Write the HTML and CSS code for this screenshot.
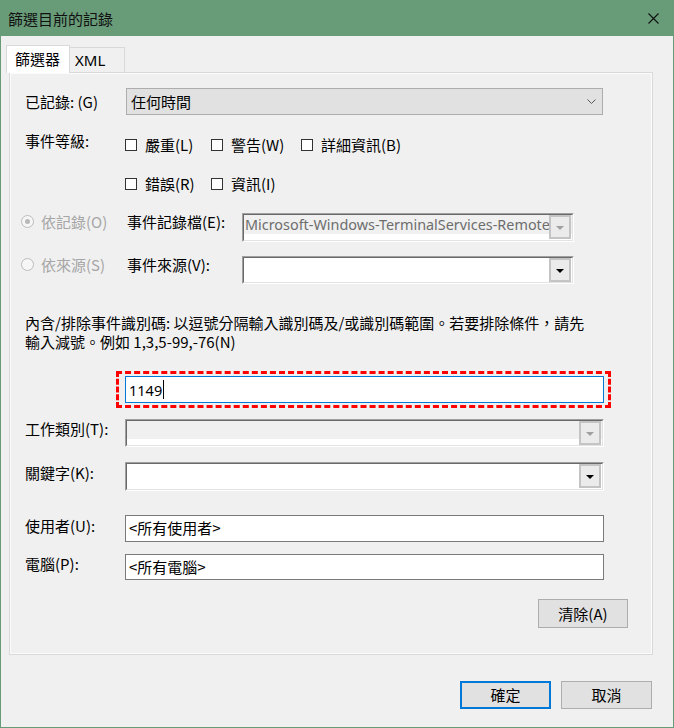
FILE: index.html
```html
<!DOCTYPE html>
<html lang="zh-Hant">
<head>
<meta charset="utf-8">
<title>篩選目前的記錄</title>
<link rel="stylesheet" href="styles.css">
</head>
<body>
<div class="window">
  <div class="titlebar">
    <span class="title">篩選目前的記錄</span>
    <svg class="close" width="11" height="11" viewBox="0 0 11 11"><path d="M0.5 0.5 L10.5 10.5 M10.5 0.5 L0.5 10.5" stroke="#111" stroke-width="1.1" fill="none"/></svg>
  </div>
  <div class="tabs">
    <div class="tab active">篩選器</div>
    <div class="tab">XML</div>
  </div>
  <div class="panel">
    <div class="row r-logged">
      <span class="lbl">已記錄: (G)</span>
      <div class="select">
        <span class="sel-text">任何時間</span>
        <svg class="chev" width="9" height="5" viewBox="0 0 9 5"><path d="M0.5 0.5 L4.5 4.5 L8.5 0.5" stroke="#5a5a5a" stroke-width="1" fill="none"/></svg>
      </div>
    </div>
    <div class="row r-level">
      <span class="lbl lvl">事件等級:</span>
      <div class="checks">
        <label class="chk"><span class="box"></span>嚴重(L)</label>
        <label class="chk"><span class="box"></span>警告(W)</label>
        <label class="chk"><span class="box"></span>詳細資訊(B)</label>
        <label class="chk"><span class="box"></span>錯誤(R)</label>
        <label class="chk"><span class="box"></span>資訊(I)</label>
      </div>
    </div>
    <div class="row r-radio r-log">
      <span class="radio on"></span>
      <span class="rlbl">依記錄(O)</span>
      <span class="clbl">事件記錄檔(E):</span>
      <div class="combo disabled narrow">
        <div class="combo-in">
          <span class="ctext">Microsoft-Windows-TerminalServices-RemoteC</span>
          <span class="dd"><i></i></span>
        </div>
      </div>
    </div>
    <div class="row r-radio r-src">
      <span class="radio"></span>
      <span class="rlbl">依來源(S)</span>
      <span class="clbl">事件來源(V):</span>
      <div class="combo narrow h28">
        <div class="combo-in">
          <span class="ctext"></span>
          <span class="dd"><i></i></span>
        </div>
      </div>
    </div>
    <p class="desc">內含/排除事件識別碼: 以逗號分隔輸入識別碼及/或識別碼範圍。若要排除條件，請先<br>輸入減號。例如 1,3,5-99,-76(N)</p>
    <div class="dashed">
      <div class="idinput"><span>1149</span><span class="caret"></span></div>
    </div>
    <div class="row r-task">
      <span class="lbl">工作類別(T):</span>
      <div class="combo disabled wide h28">
        <div class="combo-in">
          <span class="ctext"></span>
          <span class="dd"><i></i></span>
        </div>
      </div>
    </div>
    <div class="row r-key">
      <span class="lbl">關鍵字(K):</span>
      <div class="combo wide">
        <div class="combo-in">
          <span class="ctext"></span>
          <span class="dd"><i></i></span>
        </div>
      </div>
    </div>
    <div class="row r-user">
      <span class="lbl">使用者(U):</span>
      <div class="textbox">&lt;所有使用者&gt;</div>
    </div>
    <div class="row r-comp">
      <span class="lbl">電腦(P):</span>
      <div class="textbox h26">&lt;所有電腦&gt;</div>
    </div>
    <div class="row r-clear">
      <button class="btn clear">清除(A)</button>
    </div>
  </div>
  <div class="footer">
    <button class="btn default">確定</button>
    <button class="btn cancel">取消</button>
  </div>
</div>
</body>
</html>
```

FILE: styles.css
```css
html, body {
  margin: 0;
  padding: 0;
  background: #f0f0f0;
}

body {
  font-family: "Noto Sans CJK TC", "Noto Sans", sans-serif;
  font-size: 15px;
  color: #000;
}

.window {
  width: 674px;
  height: 728px;
  box-sizing: border-box;
  border: 1px solid #689b78;
  border-top: 0;
  display: flex;
  flex-direction: column;
  background: #f0f0f0;
  overflow: hidden;
}

.titlebar {
  height: 36px;
  flex: none;
  background: #689b78;
  display: flex;
  align-items: center;
}

.title {
  padding-left: 7px;
  font-size: 15px;
  color: #111;
  line-height: 20px;
  margin-top: 2px;
}

.close {
  margin-left: auto;
  margin-right: 14px;
  margin-top: 1px;
}

.tabs {
  display: flex;
  align-items: flex-end;
  height: 27px;
  margin-top: 9px;
  padding-left: 7px;
  position: relative;
  z-index: 1;
}

.tab {
  box-sizing: border-box;
  height: 25px;
  border: 1px solid #d9d9d9;
  border-bottom: 0;
  background: #f0f0f0;
  line-height: 24px;
  font-size: 15px;
}

.tab.active {
  height: 28px;
  width: 64px;
  margin-left: -2px;
  margin-bottom: -1px;
  background: #fff;
  padding-left: 8px;
  line-height: 26px;
}

.tab:not(.active) {
  width: 56px;
  margin-left: -1px;
  padding-left: 5px;
  font-family: "Noto Sans", sans-serif;
  line-height: 25px;
}

.panel {
  margin-left: 8px;
  width: 644px;
  box-sizing: border-box;
  border: 1px solid #d9d9d9;
  box-shadow: inset 0 0 0 1px #fbfbfb;
  padding: 15px 24px 26px 15px;
  display: flex;
  flex-direction: column;
  flex: none;
}

.row {
  display: flex;
  align-items: flex-start;
}

.lbl {
  width: 100px;
  flex: none;
  white-space: nowrap;
  line-height: 20px;
}

/* 已記錄 */
.r-logged {
  align-items: center;
}

.select {
  margin-left: 1px;
  width: 477px;
  height: 27px;
  box-sizing: border-box;
  border: 1px solid #adadad;
  background: #e1e1e1;
  display: flex;
  align-items: center;
  padding-left: 4px;
}

.sel-text {
  line-height: 20px;
}

.chev {
  margin-left: auto;
  margin-right: 6px;
}

/* 事件等級 */
.r-level {
  margin-top: 15px;
}

.lvl {
  line-height: 22px;
}

.checks {
  padding-top: 4px;
  display: grid;
  grid-template-columns: 86px 90px auto;
  grid-auto-rows: 22px;
  row-gap: 17px;
}

.chk {
  display: flex;
  align-items: center;
  white-space: nowrap;
  line-height: 22px;
}

.box {
  width: 12px;
  height: 12px;
  box-sizing: border-box;
  border: 1px solid #333;
  background: #fff;
  margin-right: 8px;
  flex: none;
}

/* radio rows */
.r-radio {
  margin-left: -4px;
}

.r-log {
  margin-top: 18px;
}

.r-src {
  margin-top: 14px;
}

.radio {
  width: 13px;
  height: 13px;
  box-sizing: border-box;
  border: 1px solid #bcbcbc;
  border-radius: 50%;
  background: #f6f6f6;
  margin-top: 2px;
  flex: none;
  display: flex;
  align-items: center;
  justify-content: center;
}

.radio.on::after {
  content: "";
  width: 5px;
  height: 5px;
  border-radius: 50%;
  background: #b8b8b8;
}

.rlbl {
  width: 86px;
  margin-left: 7px;
  color: #a6a6a6;
  line-height: 17px;
  white-space: nowrap;
  flex: none;
}

.clbl {
  width: 115px;
  line-height: 17px;
  white-space: nowrap;
  flex: none;
}

/* sunken combo */
.combo {
  height: 29px;
  box-sizing: border-box;
  border: 1px solid;
  border-color: #a0a0a0 #fff #fff #a0a0a0;
  flex: none;
}

.combo.h28 {
  height: 28px;
}

.combo.narrow {
  width: 332px;
}

.combo.wide {
  width: 479px;
}

.combo-in {
  height: 100%;
  box-sizing: border-box;
  border: 1px solid;
  border-color: #696969 #e3e3e3 #e3e3e3 #696969;
  background: #fff;
  display: flex;
  align-items: flex-start;
  overflow: hidden;
}

.combo.disabled .combo-in {
  background: linear-gradient(#f0f0f0 0, #f0f0f0 calc(100% - 6px), #fff calc(100% - 6px));
}

.ctext {
  flex: 1;
  min-width: 0;
  overflow: hidden;
  white-space: nowrap;
  font-family: "Noto Sans", sans-serif;
  font-size: 14.4px;
  line-height: 20px;
  color: #6d6d6d;
  padding-left: 1px;
}

.dd {
  width: 22px;
  height: 24px;
  box-sizing: border-box;
  border: 2px solid #c4c4c4;
  background: #ebebeb;
  margin: 0 1px 0 0;
  flex: none;
  display: flex;
  align-items: center;
  justify-content: center;
}

.dd i {
  width: 0;
  height: 0;
  border-left: 4px solid transparent;
  border-right: 4px solid transparent;
  border-top: 4px solid #000;
  margin-top: 1px;
}

.combo.disabled .dd i {
  border-top-color: #a0a0a0;
}

/* description */
.desc {
  margin: 29px 0 0 0;
  line-height: 19px;
  white-space: nowrap;
}

/* dashed highlight */
.dashed {
  margin-top: 20px;
  margin-left: 91px;
  width: 495px;
  height: 37px;
  box-sizing: border-box;
  border: 3px dashed #f00;
  padding: 2px 4px 2px 6px;
}

.idinput {
  height: 27px;
  box-sizing: border-box;
  border: 1px solid #0078d7;
  background: #fff;
  display: flex;
  align-items: center;
  padding-left: 3px;
  font-family: "Noto Sans", sans-serif;
  font-size: 14.5px;
}

.caret {
  width: 1px;
  height: 19px;
  background: #000;
  margin-left: 1px;
}

.r-task {
  margin-top: 11px;
}

.r-key {
  margin-top: 15px;
}

.r-key .lbl {
  line-height: 21px;
}

.r-user {
  margin-top: 24px;
}

.r-user .lbl {
  line-height: 22px;
}

.r-comp {
  margin-top: 12px;
}

.textbox {
  width: 479px;
  height: 27px;
  box-sizing: border-box;
  border: 1px solid #7a7a7a;
  background: #fff;
  padding-left: 3px;
  line-height: 24px;
  white-space: nowrap;
}

.textbox.h26 {
  height: 26px;
  line-height: 23px;
}

.r-clear {
  margin-top: 19px;
  justify-content: flex-end;
}

.btn {
  font-family: "Noto Sans CJK TC", "Noto Sans", sans-serif;
  font-size: 15px;
  color: #000;
  background: #e1e1e1;
  border: 1px solid #adadad;
  height: 29px;
  box-sizing: border-box;
  padding: 0;
  margin: 0;
  line-height: 20px;
}

.btn.clear {
  width: 90px;
}

.footer {
  display: flex;
  justify-content: flex-end;
  gap: 10px;
  margin-top: 26px;
  padding-right: 21px;
}

.btn.default {
  width: 91px;
  height: 28px;
  border: 2px solid #0078d7;
}

.btn.cancel {
  width: 91px;
  height: 28px;
}
```
